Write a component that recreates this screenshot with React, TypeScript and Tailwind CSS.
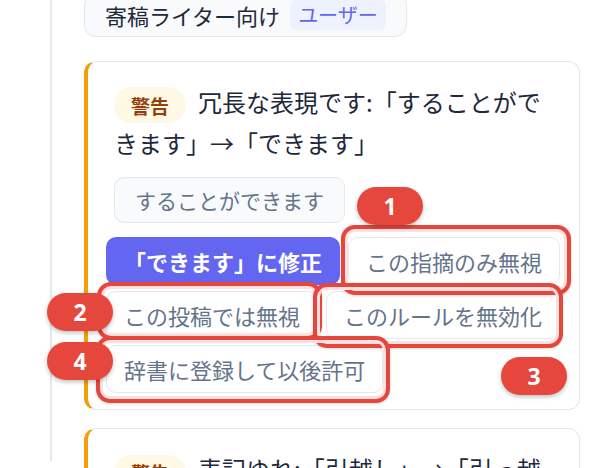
const marks = [
  { n: '1', box: 'left-[341px] top-[225px] w-[230px] h-[70px]', badge: 'left-[357px] top-[187px]' },
  { n: '2', box: 'left-[97px] top-[282px] w-[225px] h-[58px]', badge: 'left-[47px] top-[293px]' },
  { n: '3', box: 'left-[313px] top-[283px] w-[250px] h-[65px]', badge: 'left-[501px] top-[357px]' },
  { n: '4', box: 'left-[96px] top-[336px] w-[294px] h-[67px]', badge: 'left-[47px] top-[342px]' },
];

const actions = ['この指摘のみ無視', 'この投稿では無視', 'このルールを無効化', '辞書に登録して以後許可'];

function WarnBadge() {
  return (
    <span className="mr-3 inline-flex h-9 items-center rounded-full bg-[#fef8e4] px-[17px] align-middle text-[19px] font-bold leading-none text-[#92400e]">
      警告
    </span>
  );
}

export default function App() {
  return (
    <div className="relative h-[468px] w-[612px] overflow-hidden bg-white font-['Noto_Sans_CJK_JP','Noto_Sans',sans-serif]">
      <div className="ml-[50px] h-full border-l-2 border-[#e5e7eb] pl-8">
        {/* audience card (cut off at top) */}
        <div className="-mt-[7px] flex w-fit items-center gap-[10px] rounded-xl border-[1.5px] border-[#e2e8f0] bg-[#f8fafc] px-5 pt-[6px] pb-[6px]">
          <span className="text-[22px] leading-[30px] text-[#1e293b]">寄稿ライター向け</span>
          <span className="rounded-md bg-[#eef2ff] px-2 text-[20px] leading-[30px] text-[#6366f1]">ユーザー</span>
        </div>

        {/* issue card */}
        <div className="mt-[24px] w-[496px] rounded-xl border border-l-4 border-[#e2e8f0] border-l-[#f59e0b] bg-white pt-5 pr-6 pb-4 pl-[26px]">
          <p className="text-[24px] leading-[39px] text-[#1e293b]">
            <WarnBadge />
            冗長な表現です:「することができます」→「できます」
          </p>
          <div className="mt-[15px] inline-block rounded-[10px] border-[1.5px] border-[#e2e8f0] bg-[#f8fafc] px-5 py-2 text-[21px] leading-[28px] text-[#64748b]">
            することができます
          </div>
          <div className="mt-[14px] -ml-2 flex w-[458px] flex-wrap gap-x-2 gap-y-1.5">
            <button className="h-12 rounded-[10px] bg-[#6366f1] px-[18px] text-[22px] font-bold text-white">
              「できます」に修正
            </button>
            {actions.map((a) => (
              <button
                key={a}
                className="h-12 rounded-[10px] border border-[#e2e8f0] bg-white px-[17px] text-[22px] text-[#64748b]"
              >
                {a}
              </button>
            ))}
          </div>
        </div>

        {/* next issue card (cut off at bottom) */}
        <div className="mt-[18px] w-[496px] rounded-xl border border-l-4 border-[#e2e8f0] border-l-[#f59e0b] bg-white pt-5 pr-6 pb-3 pl-[26px]">
          <p className="text-[24px] leading-[39px] text-[#1e293b]">
            <WarnBadge />
            表記ゆれ:「引越し」→「引っ越し」
          </p>
        </div>
      </div>

      {/* annotation overlay */}
      {marks.map((m) => (
        <div
          key={'box' + m.n}
          className={`absolute rounded-[14px] border-4 border-[#e5473c] shadow-[inset_0_0_0_3px_#fde1e1,0_1px_3px_rgba(0,0,0,0.15)] ${m.box}`}
        />
      ))}
      {marks.map((m) => (
        <div
          key={'badge' + m.n}
          className={`absolute flex h-[38px] w-[66px] items-center justify-center rounded-full bg-[#e5473c] font-['Noto_Sans',sans-serif] text-[23px] font-bold text-white shadow-[0_2px_4px_rgba(0,0,0,0.25)] ${m.badge}`}
        >
          {m.n}
        </div>
      ))}
    </div>
  );
}
